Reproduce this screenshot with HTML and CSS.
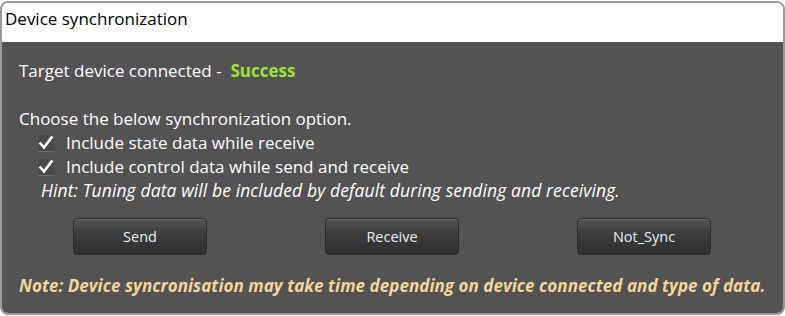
FILE: index.html
```html
<!DOCTYPE html>
<html>
<head>
<meta charset="utf-8">
<link rel="stylesheet" href="styles.css">
</head>
<body>
<div class="window">
  <div class="titlebar">Device synchronization</div>
  <div class="content">
    <div class="status">Target device connected -&nbsp; <span class="success">Success</span></div>
    <div class="choose">Choose the below synchronization option.</div>
    <div class="option">
      <span class="check"><svg width="16" height="16" viewBox="0 0 16 16"><path d="M2.5 8.5 L6 12.5 L13.5 2.5" fill="none" stroke="#ffffff" stroke-width="2.6" stroke-linecap="square"/></svg></span>
      <span>Include state data while receive</span>
    </div>
    <div class="option">
      <span class="check"><svg width="16" height="16" viewBox="0 0 16 16"><path d="M2.5 8.5 L6 12.5 L13.5 2.5" fill="none" stroke="#ffffff" stroke-width="2.6" stroke-linecap="square"/></svg></span>
      <span>Include control data while send and receive</span>
    </div>
    <div class="hint">Hint: Tuning data will be included by default during sending and receiving.</div>
    <div class="buttons">
      <button class="btn">Send</button>
      <button class="btn">Receive</button>
      <button class="btn">Not_Sync</button>
    </div>
    <div class="note">Note: Device syncronisation may take time depending on device connected and type of data.</div>
  </div>
</div>
</body>
</html>
```
FILE: styles.css
```css
html, body {
  margin: 0;
  padding: 0;
  background: #ffffff;
}
body {
  font-family: "Open Sans", "Noto Sans", sans-serif;
}
.window {
  margin-top: 1px;
  width: 785px;
  height: 314px;
  box-sizing: border-box;
  border: 2px solid #9a9a9a;
  border-radius: 8px;
  overflow: hidden;
  display: flex;
  flex-direction: column;
}
.titlebar {
  height: 39px;
  flex: none;
  background: #ffffff;
  color: #000000;
  font-size: 17px;
  padding-left: 3px;
  line-height: 32px;
}
.content {
  flex: 1;
  background: #535353;
  color: #ffffff;
  padding: 17px 17px 0 17px;
  font-size: 17px;
}
.status {
  line-height: 24px;
}
.success {
  color: #9ee234;
  font-weight: 700;
}
.choose {
  margin-top: 24px;
  line-height: 24px;
}
.option {
  display: flex;
  align-items: center;
  gap: 12px;
  padding-left: 19px;
  line-height: 24px;
}
.check {
  width: 16px;
  height: 16px;
  display: inline-flex;
  border-bottom: 1px solid #6a6a6a;
  background: #4a4a4a;
}
.hint {
  font-style: italic;
  padding-left: 22px;
  line-height: 22px;
  font-size: 17.5px;
  letter-spacing: 0.1px;
}
.buttons {
  display: flex;
  justify-content: space-between;
  padding: 0 55px 0 54px;
  margin-top: 17px;
}
.btn {
  width: 134px;
  height: 37px;
  border-radius: 4px;
  border: 1px solid #2b2b2b;
  background: linear-gradient(#555555 0%, #3c3c3c 45%, #303030 100%);
  box-shadow: inset 0 1px 0 #6a6a6a;
  color: #e8eef4;
  font-family: "Open Sans", "Noto Sans", sans-serif;
  font-size: 14.5px;
  padding: 0;
}
.note {
  margin-top: 19px;
  color: #f4d49a;
  font-weight: 700;
  font-style: italic;
  font-size: 17px;
  letter-spacing: 0.05px;
  line-height: 24px;
}
```
